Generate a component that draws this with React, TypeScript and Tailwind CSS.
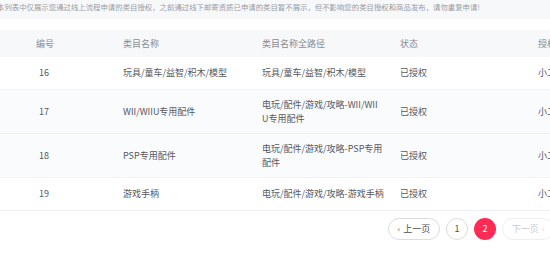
const rows = [
  { id: 16, name: '玩具/童车/益智/积木/模型', path: ['玩具/童车/益智/积木/模型'], grey: false },
  { id: 17, name: 'WII/WIIU专用配件', path: ['电玩/配件/游戏/攻略-WII/WII', 'U专用配件'], grey: true },
  { id: 18, name: 'PSP专用配件', path: ['电玩/配件/游戏/攻略-PSP专用', '配件'], grey: true },
  { id: 19, name: '游戏手柄', path: ['电玩/配件/游戏/攻略-游戏手柄'], grey: false },
];

export default function App() {
  return (
    <div
      className="w-[550px] h-[263px] overflow-hidden bg-white text-[9px]"
      style={{ fontFamily: '"Noto Sans CJK SC", "Noto Sans", sans-serif' }}
    >
      <div className="h-[19px] bg-[#f7f8fa] text-[7.4px] leading-[14px] text-[#9a9ca3] whitespace-nowrap ml-[-3px]">
        本列表中仅展示您通过线上流程申请的类目授权，之前通过线下邮寄资质已申请的类目暂不展示，但不影响您的类目授权和商品发布，请勿重复申请!
      </div>

      <div className="mt-[11px] w-[700px]">
        <div className="flex h-[27px] items-center bg-[#f7f8fa] text-[#8a8d93]">
          <div className="w-[123px] shrink-0 pl-[36px]">编号</div>
          <div className="w-[139px] shrink-0">类目名称</div>
          <div className="w-[138px] shrink-0">类目名称全路径</div>
          <div className="w-[138px] shrink-0">状态</div>
          <div className="w-[138px] shrink-0">授权来源</div>
        </div>
        {rows.map((r) => (
          <div
            key={r.id}
            className={
              'flex items-center border-b border-[#f0f1f3] text-[#55585e] ' +
              (r.path.length > 1 ? 'h-[44px] ' : 'h-[33px] ') +
              (r.grey ? 'bg-[#fafbfc]' : 'bg-white')
            }
          >
            <div className="w-[123px] shrink-0 pl-[39px]">{r.id}</div>
            <div className="w-[139px] shrink-0 whitespace-nowrap">{r.name}</div>
            <div className="w-[138px] shrink-0 leading-[14px]">
              {r.path.map((l, i) => (
                <div key={i} className="whitespace-nowrap">{l}</div>
              ))}
            </div>
            <div className="w-[138px] shrink-0">已授权</div>
            <div className="w-[138px] shrink-0 whitespace-nowrap">小二审核</div>
          </div>
        ))}
      </div>

      <div className="mt-[7px] flex items-center justify-end gap-[6px] pr-0 mr-[-4px] text-[9px]">
        <button className="flex h-[22px] w-[52px] items-center justify-center gap-[3px] rounded-full border border-[#dcdde0] text-[#4b4e55]">
          <span className="text-[8px]">‹</span>
          <span>上一页</span>
        </button>
        <button className="flex h-[22px] w-[22px] items-center justify-center rounded-full border border-[#dcdde0] text-[#4b4e55]">
          1
        </button>
        <button className="flex h-[22px] w-[22px] items-center justify-center rounded-full bg-[#fe2c55] text-white">
          2
        </button>
        <button className="flex h-[22px] w-[52px] items-center justify-center gap-[3px] rounded-full border border-[#eeeff1] text-[#c8cace]">
          <span>下一页</span>
          <span className="text-[8px]">›</span>
        </button>
      </div>
    </div>
  );
}
